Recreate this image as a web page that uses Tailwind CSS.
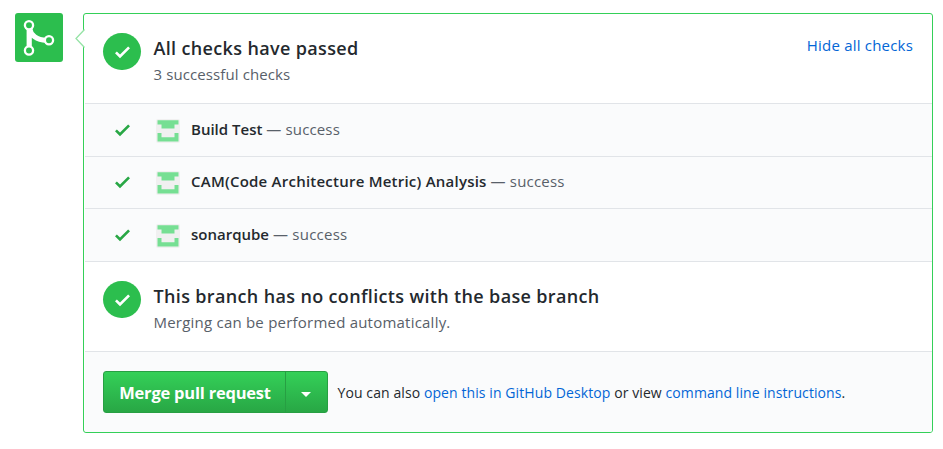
<!DOCTYPE html>
<html lang="en">
<head>
<meta charset="utf-8">
<title>Merge status</title>
<script src="https://cdn.jsdelivr.net/npm/@tailwindcss/browser@4"></script>
</head>
<body class="bg-white">
<svg class="hidden">
  <symbol id="check" viewBox="0 0 12 16"><path fill="currentColor" fill-rule="evenodd" d="M12 5l-8 8-4-4 1.5-1.5L4 10l6.500-6.500L12 5z"/></symbol>
  <symbol id="avatar" viewBox="0 0 24 24"><rect width="24" height="24" rx="2" fill="#f0f0f0"/><path fill="#76df93" d="M1.500 1.200h21v4.300h-4v4h-13v-4h-4zM1.500 14h4v4.200h13V14h4v8.500h-21z"/></symbol>
</svg>
<main class="flex h-[449px] w-[943px] items-start pt-[13px] pl-[15px] font-['Open_Sans','Noto_Sans',sans-serif] text-[15px] text-[#24292e]">
  <div class="h-[49px] w-12 shrink-0 rounded-[3px] bg-[#2cbe4e]">
    <svg class="h-[49px] w-12" viewBox="0 0 48 49" fill="none" stroke="#fff">
      <path stroke-width="5.200" d="M14.200 15v21M14.500 15c1 7 7 12.300 17 12.300"/>
      <g stroke-width="2.300" fill="#2cbe4e"><circle cx="14" cy="12.300" r="4.100"/><circle cx="14" cy="37.500" r="4.100"/><circle cx="34" cy="27.300" r="4.100"/></g>
    </svg>
  </div>
  <section class="relative ml-5 flex h-[420px] w-[850px] flex-col rounded-[3px] border border-[#34d058] pl-px">
    <svg class="absolute top-[14px] -left-[9px] h-[21px] w-[10px]" viewBox="0 0 10 21"><path fill="#fff" d="M10 1L1 10.500 10 20z"/><path fill="none" stroke="#95e3a5" stroke-width="1.300" d="M9.500 1.500L1 10.500l8.500 9"/></svg>
    <div class="flex h-[89px] shrink-0 pl-[18px]">
      <div class="mt-[19px] flex h-[37px] w-[38px] items-center justify-center rounded-full bg-[#2cbe4e] text-white"><svg class="h-5 w-[15px]"><use href="#check"/></svg></div>
      <div class="ml-[12.500px] flex-1 pt-[21px]">
        <h2 class="h-[26px] text-[18px] leading-[26px] font-semibold tracking-[0.35px]"><span class="whitespace-nowrap">All checks have passed</span></h2>
        <p class="leading-[26px] tracking-[0.1px] text-[#586069]"><span class="whitespace-nowrap">3 successful checks</span></p>
      </div>
      <a class="mt-[18px] mr-[19px] h-[26px] leading-[26px] tracking-[0.2px] text-[#0366d6]"><span class="whitespace-nowrap">Hide all checks</span></a>
    </div>
    <div class="flex h-[53px] shrink-0 items-center border-t border-[#e1e4e8] bg-[#fafbfc] pl-[30px]">
      <svg class="h-5 w-[15px] text-[#28a745]"><use href="#check"/></svg><svg class="mt-[2px] ml-[26px] size-6"><use href="#avatar"/></svg>
      <p class="ml-[11px] pb-[2px] whitespace-nowrap text-[#586069]"><strong class="font-semibold text-[#24292e]">Build Test</strong> <span class="tracking-[0.15px]">— success</span></p>
    </div>
    <div class="flex h-[52px] shrink-0 items-center border-t border-[#e1e4e8] bg-[#fafbfc] pl-[30px]">
      <svg class="mb-px h-5 w-[15px] text-[#28a745]"><use href="#check"/></svg><svg class="mt-px ml-[26px] size-6"><use href="#avatar"/></svg>
      <p class="ml-[11px] pb-[2px] whitespace-nowrap text-[#586069]"><strong class="font-semibold tracking-[0.23px] text-[#24292e]">CAM(Code Architecture Metric) Analysis</strong> <span class="tracking-[0.2px]">— success</span></p>
    </div>
    <div class="flex h-[53px] shrink-0 items-center border-t border-[#e1e4e8] bg-[#fafbfc] pl-[30px]">
      <svg class="h-5 w-[15px] text-[#28a745]"><use href="#check"/></svg><svg class="mt-[2px] ml-[26px] size-6"><use href="#avatar"/></svg>
      <p class="ml-[11px] pb-[2px] whitespace-nowrap text-[#586069]"><strong class="font-semibold text-[#24292e]">sonarqube</strong> <span class="tracking-[0.25px]">— success</span></p>
    </div>
    <div class="flex h-[90px] shrink-0 border-t border-[#e1e4e8] pl-[18px]">
      <div class="mt-[19px] flex h-[37px] w-[38px] items-center justify-center rounded-full bg-[#2cbe4e] text-white"><svg class="h-5 w-[15px]"><use href="#check"/></svg></div>
      <div class="ml-[12.500px] flex-1 pt-[21px]">
        <h2 class="h-[26px] text-[18px] leading-[26px] font-semibold tracking-[0.35px]"><span class="whitespace-nowrap">This branch has no conflicts with the base branch</span></h2>
        <p class="leading-[26px] tracking-[0.22px] text-[#586069]"><span class="whitespace-nowrap">Merging can be performed automatically.</span></p>
      </div>
    </div>
    <div class="flex flex-1 items-start rounded-b-[2px] border-t border-[#e1e4e8] bg-[#fafbfc] pt-[19px] pl-[18px]">
      <div class="flex h-[42px] w-[225px] rounded-[3px] border border-[#279f43] bg-linear-to-b from-[#34d058] to-[#28a745] text-white">
        <button class="w-[181px] pt-[3px] pl-px text-center text-[16.500px] font-bold tracking-[-0.22px] whitespace-nowrap">Merge pull request</button>
        <button class="flex flex-1 items-center justify-center border-l border-[#279f43] pt-[5px] pr-[2px]"><svg class="h-[5px] w-[10px]" viewBox="0 0 10 5"><path fill="#fff" d="M0 0h10L5 5z"/></svg></button>
      </div>
      <p class="ml-[9.500px] pt-[9px] text-[14px] leading-[26px] tracking-[0.09px] whitespace-nowrap">You can also <a class="text-[#0366d6]">open this in GitHub Desktop</a> or view <a class="text-[#0366d6]">command line instructions</a>.</p>
    </div>
  </section>
</main>
</body>
</html>
